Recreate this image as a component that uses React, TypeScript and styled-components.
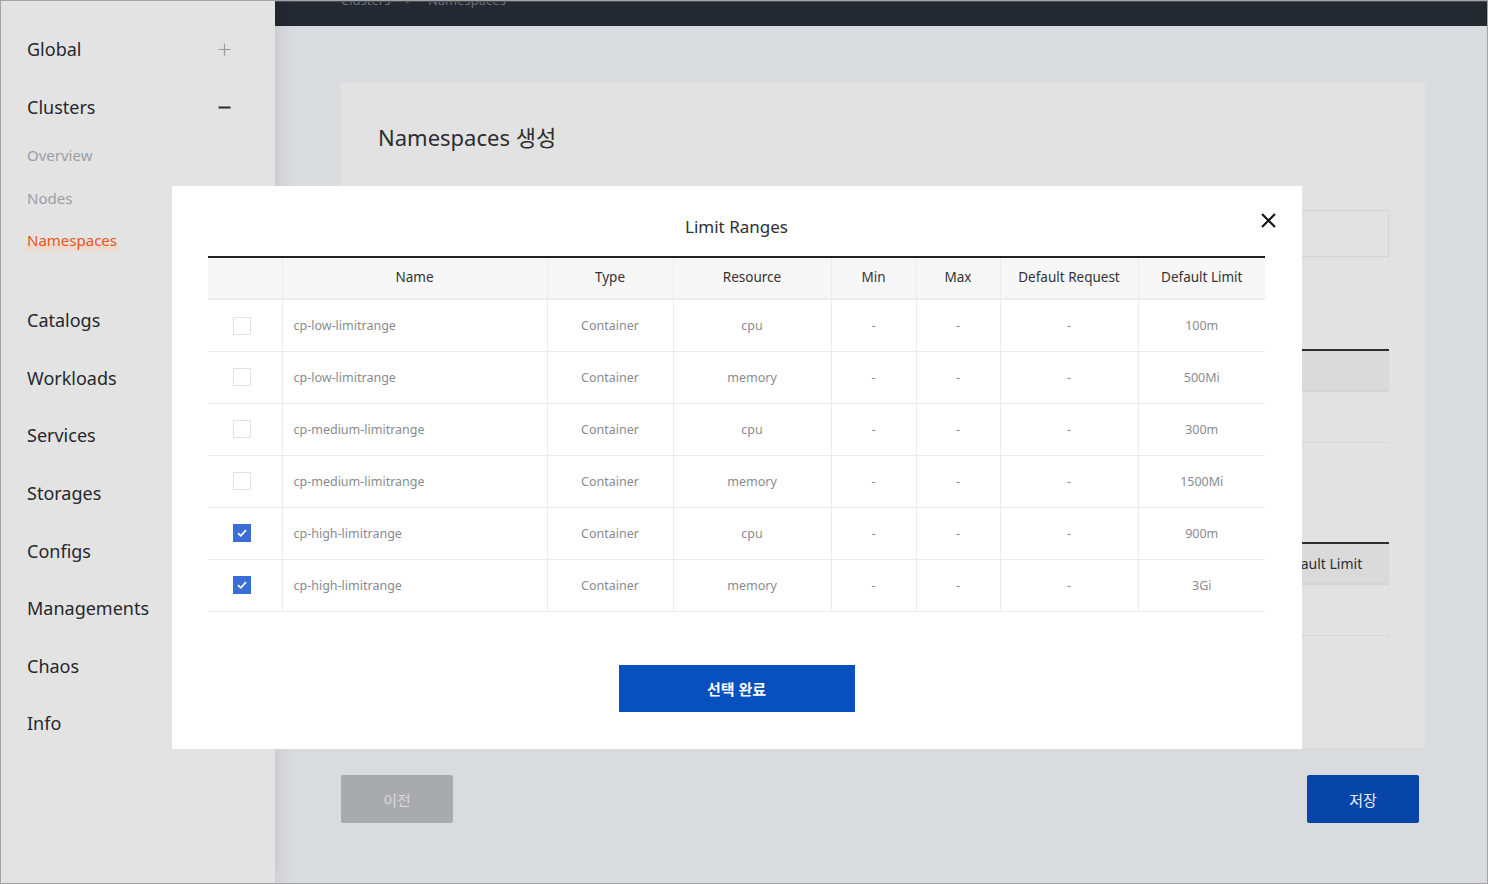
import React from "react";
import styled, { createGlobalStyle } from "styled-components";

const GlobalStyle = createGlobalStyle`
  html, body { margin: 0; padding: 0; }
  body { font-family: "Noto Sans", "Noto Sans CJK KR", sans-serif; }
  * { box-sizing: border-box; }
`;

const FONT = `"Noto Sans", "Noto Sans CJK KR", sans-serif`;

const Frame = styled.div`
  position: relative;
  width: 1488px;
  height: 884px;
  border: 1px solid #a3a3a3;
  display: flex;
  overflow: hidden;
  font-family: ${FONT};
`;

const Sidebar = styled.nav`
  position: relative;
  z-index: 1;
  width: 274px;
  flex-shrink: 0;
  background: #e3e3e3;
  padding: 19px 0 0 26px;
  display: flex;
  flex-direction: column;
  box-shadow: 2px 0 18px rgba(0, 0, 0, 0.1);
`;

const MenuItem = styled.div<{ $h?: number }>`
  height: ${(p) => p.$h ?? 57.6}px;
  display: flex;
  align-items: center;
  justify-content: space-between;
  padding-right: 44px;
  font-size: 18px;
  color: #26282c;
`;

const SubList = styled.div`
  display: flex;
  flex-direction: column;
  margin-top: -2px;
  margin-bottom: 30px;
`;

const SubItem = styled.div<{ $active?: boolean }>`
  height: 42.5px;
  display: flex;
  align-items: center;
  font-size: 15px;
  color: ${(p) => (p.$active ? "#e2561f" : "#9b9ea4")};
  span {
    background: ${(p) =>
      p.$active
        ? "linear-gradient(to bottom, transparent 62%, #efd8ce 62%, #efd8ce 100%)"
        : "none"};
    padding: 0 1px 1px 1px;
    margin-left: -1px;
  }
`;

const Main = styled.main`
  flex: 1;
  background: #dadbde;
  display: flex;
  flex-direction: column;
`;

const TopBar = styled.header`
  height: 25px;
  flex-shrink: 0;
  background: #232831;
  display: flex;
  align-items: flex-end;
  padding: 0 0 17px 66px;
  overflow: hidden;
  border-top: 1px solid #4a4d53;
`;

const Crumb = styled.div`
  display: flex;
  gap: 15px;
  font-size: 13px;
  line-height: 18px;
  color: #6b7180;
  white-space: nowrap;
`;

const Body = styled.div`
  padding: 57px 62px 0 66px;
  display: flex;
  flex-direction: column;
`;

const Panel = styled.section`
  height: 665px;
  background: #e2e2e2;
  padding: 38px 36px 0 37px;
  display: flex;
  flex-direction: column;
`;

const PanelTitle = styled.h2`
  margin: 0;
  font-size: 22px;
  line-height: 32px;
  font-weight: 400;
  color: #2c2d30;
`;

const FakeInput = styled.div`
  margin-top: 57px;
  height: 47px;
  border: 1px solid #d4d4d4;
`;

const BgTable = styled.div<{ $mt: number }>`
  margin-top: ${(p) => p.$mt}px;
  border-top: 2px solid #2e2e2e;
`;

const BgHead = styled.div`
  height: 41px;
  background: #dadada;
  border-bottom: 2px solid #d4d4d4;
  display: grid;
  grid-template-columns: 1fr 138px;
  align-items: center;
  font-size: 14px;
  color: #2c2d30;
  span:last-child { text-align: center; }
`;

const BgRow = styled.div`
  height: 51px;
  border-bottom: 1px solid #d6d6d6;
`;

const ButtonRow = styled.div`
  margin-top: 27px;
  padding-right: 6px;
  display: flex;
  justify-content: space-between;
`;

const PageButton = styled.button<{ $primary?: boolean }>`
  width: 112px;
  height: 48px;
  border: none;
  border-radius: 2px;
  font-family: ${FONT};
  font-size: 15px;
  background: ${(p) => (p.$primary ? "#0746a8" : "#a9aaae")};
  color: ${(p) => (p.$primary ? "#e9edf6" : "#d9d9da")};
`;

const Modal = styled.div`
  position: absolute;
  left: 171px;
  top: 185px;
  width: 1130px;
  height: 563px;
  background: #ffffff;
  z-index: 5;
  padding: 29px 37px 0 36px;
  display: flex;
  flex-direction: column;
  align-items: center;
`;

const ModalTitle = styled.h3`
  margin: 0;
  font-size: 17px;
  line-height: 24px;
  font-weight: 400;
  color: #2e3033;
`;

const CloseButton = styled.button`
  position: absolute;
  left: 1087px;
  top: 25px;
  width: 18px;
  height: 18px;
  padding: 0;
  border: none;
  background: none;
  display: flex;
  align-items: center;
  justify-content: center;
`;

const Table = styled.table`
  margin-top: 17px;
  width: 1057px;
  border-collapse: collapse;
  table-layout: fixed;
  border-top: 2px solid #222222;
`;

const Th = styled.th`
  height: 42px;
  background: #f7f7f7;
  border-bottom: 2px solid #ededed;
  border-left: 1px solid #ececec;
  font-size: 13.5px;
  font-weight: 400;
  color: #333333;
  text-align: center;
  padding: 0 0 2px 0;
  &:first-child { border-left: none; }
`;

const Td = styled.td<{ $left?: boolean }>`
  height: 52px;
  border-bottom: 1px solid #ececec;
  border-left: 1px solid #ececec;
  font-size: 12.5px;
  color: #888b92;
  text-align: ${(p) => (p.$left ? "left" : "center")};
  padding: ${(p) => (p.$left ? "0 0 0 11px" : "0")};
  &:first-child { border-left: none; padding-right: 6px; }
`;

const Check = styled.span<{ $on?: boolean }>`
  display: inline-flex;
  align-items: center;
  justify-content: center;
  width: 18px;
  height: 18px;
  vertical-align: middle;
  border: 1px solid ${(p) => (p.$on ? "#3a6dd6" : "#e2e2e2")};
  background: ${(p) => (p.$on ? "#3a6dd6" : "#ffffff")};
`;

const DoneButton = styled.button`
  margin-top: 53px;
  width: 236px;
  height: 47px;
  border: none;
  background: #0750be;
  color: #ffffff;
  font-family: ${FONT};
  font-size: 15px;
  font-weight: 700;
`;

const PlusIcon = () => (
  <svg width="13" height="13" viewBox="0 0 13 13">
    <path d="M6.5 0.5v12M0.5 6.5h12" stroke="#9a9b9e" strokeWidth="1.2" />
  </svg>
);

const MinusIcon = () => (
  <svg width="13" height="13" viewBox="0 0 13 13">
    <path d="M0.5 6.5h12" stroke="#2a2b2e" strokeWidth="2" />
  </svg>
);

const CheckMark = () => (
  <svg width="12" height="10" viewBox="0 0 12 10">
    <path d="M2 5.2l2.8 2.6L10 2.2" stroke="#fff" strokeWidth="1.8" fill="none" />
  </svg>
);

const rows = [
  { name: "cp-low-limitrange", res: "cpu", limit: "100m", on: false },
  { name: "cp-low-limitrange", res: "memory", limit: "500Mi", on: false },
  { name: "cp-medium-limitrange", res: "cpu", limit: "300m", on: false },
  { name: "cp-medium-limitrange", res: "memory", limit: "1500Mi", on: false },
  { name: "cp-high-limitrange", res: "cpu", limit: "900m", on: true },
  { name: "cp-high-limitrange", res: "memory", limit: "3Gi", on: true },
];

const cols = [74, 265, 126, 158, 85, 84, 138, 127];
const heads = ["", "Name", "Type", "Resource", "Min", "Max", "Default Request", "Default Limit"];

const mainMenu = ["Catalogs", "Workloads", "Services", "Storages", "Configs", "Managements", "Chaos", "Info"];

export default function App() {
  return (
    <>
      <GlobalStyle />
      <Frame>
        <Sidebar>
          <MenuItem $h={58}>
            Global
            <PlusIcon />
          </MenuItem>
          <MenuItem $h={58}>
            Clusters
            <MinusIcon />
          </MenuItem>
          <SubList>
            <SubItem>Overview</SubItem>
            <SubItem>Nodes</SubItem>
            <SubItem $active>
              <span>Namespaces</span>
            </SubItem>
          </SubList>
          {mainMenu.map((m) => (
            <MenuItem key={m}>{m}</MenuItem>
          ))}
        </Sidebar>
        <Main>
          <TopBar>
            <Crumb>
              <span>Clusters</span>
              <span>&gt;</span>
              <span>Namespaces</span>
            </Crumb>
          </TopBar>
          <Body>
            <Panel>
              <PanelTitle>Namespaces 생성</PanelTitle>
              <FakeInput />
              <BgTable $mt={92}>
                <BgHead>
                  <span />
                  <span />
                </BgHead>
                <BgRow />
              </BgTable>
              <BgTable $mt={99}>
                <BgHead>
                  <span />
                  <span>Default Limit</span>
                </BgHead>
                <BgRow />
              </BgTable>
            </Panel>
            <ButtonRow>
              <PageButton>이전</PageButton>
              <PageButton $primary>저장</PageButton>
            </ButtonRow>
          </Body>
        </Main>
        <Modal>
          <ModalTitle>Limit Ranges</ModalTitle>
          <CloseButton aria-label="close">
            <svg width="15" height="15" viewBox="0 0 15 15">
              <path d="M1 1l13 13M14 1L1 14" stroke="#111" strokeWidth="2" />
            </svg>
          </CloseButton>
          <Table>
            <colgroup>
              {cols.map((w, i) => (
                <col key={i} style={{ width: w }} />
              ))}
            </colgroup>
            <thead>
              <tr>
                {heads.map((h, i) => (
                  <Th key={i}>{h}</Th>
                ))}
              </tr>
            </thead>
            <tbody>
              {rows.map((r, i) => (
                <tr key={i}>
                  <Td>
                    <Check $on={r.on}>{r.on && <CheckMark />}</Check>
                  </Td>
                  <Td $left>{r.name}</Td>
                  <Td>Container</Td>
                  <Td>{r.res}</Td>
                  <Td>-</Td>
                  <Td>-</Td>
                  <Td>-</Td>
                  <Td>{r.limit}</Td>
                </tr>
              ))}
            </tbody>
          </Table>
          <DoneButton>선택 완료</DoneButton>
        </Modal>
      </Frame>
    </>
  );
}
